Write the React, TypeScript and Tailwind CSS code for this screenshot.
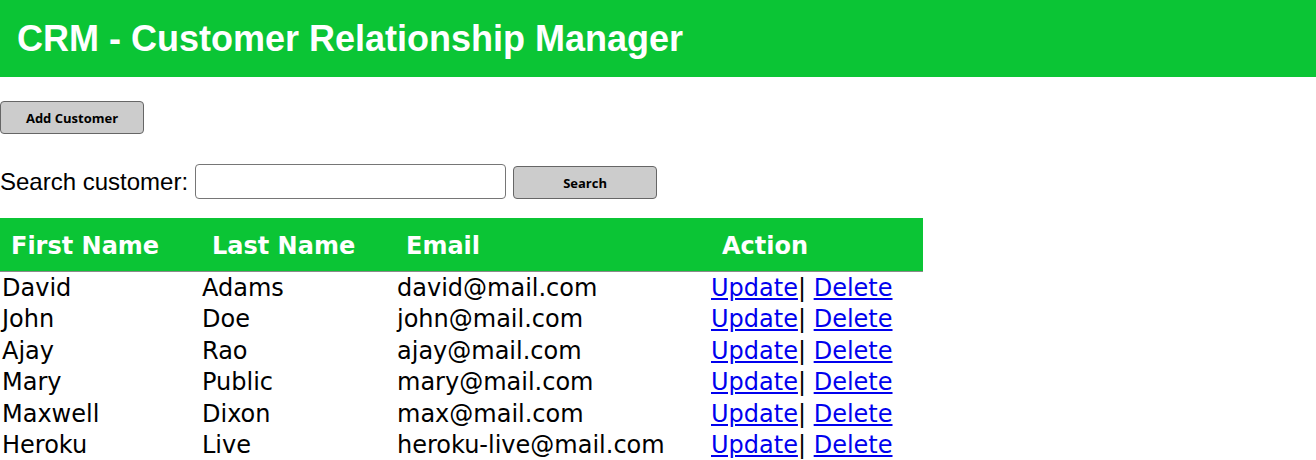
import React from "react";

const rows = [
  ["David", "Adams", "david@mail.com"],
  ["John", "Doe", "john@mail.com"],
  ["Ajay", "Rao", "ajay@mail.com"],
  ["Mary", "Public", "mary@mail.com"],
  ["Maxwell", "Dixon", "max@mail.com"],
  ["Heroku", "Live", "heroku-live@mail.com"],
];

export default function App() {
  return (
    <div className="bg-white w-[1316px] h-[460px] overflow-hidden text-black">
      <div className="h-[77px] bg-[#0bc535] flex items-center pl-[17px]">
        <h1 className="text-white font-bold text-[36px] leading-none font-['Liberation_Sans',Arial,sans-serif]">
          CRM - Customer Relationship Manager
        </h1>
      </div>
      <div className="mt-[24px] h-[33px]">
        <button className="w-[144px] h-[33px] pt-[2px] bg-[#cccccc] border border-[#666] rounded-[4px] text-[13px] font-bold font-['Open_Sans',sans-serif] text-black">
          Add Customer
        </button>
      </div>
      <div className="mt-[30px] flex items-center h-[35px] font-['Liberation_Sans',Arial,sans-serif] text-[24px]">
        <span>Search customer:</span>
        <input className="ml-[7px] w-[311px] h-[35px] border border-[#767676] rounded-[4px] bg-white" />
        <button className="ml-[7px] mt-[2px] w-[144px] h-[33px] pt-[2px] bg-[#cccccc] border border-[#666] rounded-[4px] text-[13px] font-bold font-['Open_Sans',sans-serif] text-black">
          Search
        </button>
      </div>
      <table className="mt-[19px] border-collapse font-['DejaVu_Sans',sans-serif] text-[24px]">
        <thead>
          <tr className="bg-[#0bc535] text-white h-[53px] border-b border-[#8a8a8a]">
            <th className="w-[200px] text-left font-bold pl-[11px] pt-[3px] p-0">First Name</th>
            <th className="w-[195px] text-left font-bold pl-[12px] pt-[3px] p-0">Last Name</th>
            <th className="w-[314px] text-left font-bold pl-[11px] pt-[3px] p-0">Email</th>
            <th className="w-[214px] text-left font-bold pl-[13px] pt-[3px] p-0">Action</th>
          </tr>
        </thead>
        <tbody>
          {rows.map((r) => (
            <tr key={r[2]} className="h-[31.5px]">
              <td className="p-0 pl-[2px] pt-[1px] leading-[30.5px]">{r[0]}</td>
              <td className="p-0 pl-[2px] pt-[1px] leading-[30.5px]">{r[1]}</td>
              <td className="p-0 pl-[2px] pt-[1px] leading-[30.5px]">{r[2]}</td>
              <td className="p-0 pl-[2px] pt-[1px] leading-[30.5px]">
                <a href="#" className="text-[#0000ee] underline">Update</a>|{" "}
                <a href="#" className="text-[#0000ee] underline">Delete</a>
              </td>
            </tr>
          ))}
        </tbody>
      </table>
    </div>
  );
}
